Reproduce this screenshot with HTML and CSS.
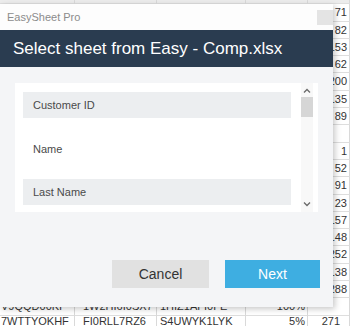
FILE: index.html
```html
<!DOCTYPE html>
<html>
<head>
    <title>EasySheet Pro - Select sheet</title>
    <link rel="stylesheet" href="styles.css">
</head>
<body>
    <div class="sheet">
        <div class="row head"><div class="cell"></div><div class="cell"></div><div class="cell"></div><div class="cell"></div><div class="cell num"></div></div>
        <div class="row"><div class="cell"></div><div class="cell"></div><div class="cell"></div><div class="cell"></div><div class="cell num">71</div></div>
        <div class="row"><div class="cell"></div><div class="cell"></div><div class="cell"></div><div class="cell"></div><div class="cell num">82</div></div>
        <div class="row"><div class="cell"></div><div class="cell"></div><div class="cell"></div><div class="cell"></div><div class="cell num">153</div></div>
        <div class="row"><div class="cell"></div><div class="cell"></div><div class="cell"></div><div class="cell"></div><div class="cell num">62</div></div>
        <div class="row"><div class="cell"></div><div class="cell"></div><div class="cell"></div><div class="cell"></div><div class="cell num">200</div></div>
        <div class="row"><div class="cell"></div><div class="cell"></div><div class="cell"></div><div class="cell"></div><div class="cell num">135</div></div>
        <div class="row"><div class="cell"></div><div class="cell"></div><div class="cell"></div><div class="cell"></div><div class="cell num">89</div></div>
        <div class="row"><div class="cell"></div><div class="cell"></div><div class="cell"></div><div class="cell"></div><div class="cell num"></div></div>
        <div class="row"><div class="cell"></div><div class="cell"></div><div class="cell"></div><div class="cell"></div><div class="cell num">1</div></div>
        <div class="row"><div class="cell"></div><div class="cell"></div><div class="cell"></div><div class="cell"></div><div class="cell num">52</div></div>
        <div class="row"><div class="cell"></div><div class="cell"></div><div class="cell"></div><div class="cell"></div><div class="cell num">91</div></div>
        <div class="row"><div class="cell"></div><div class="cell"></div><div class="cell"></div><div class="cell"></div><div class="cell num">23</div></div>
        <div class="row"><div class="cell"></div><div class="cell"></div><div class="cell"></div><div class="cell"></div><div class="cell num">157</div></div>
        <div class="row"><div class="cell"></div><div class="cell"></div><div class="cell"></div><div class="cell"></div><div class="cell num">148</div></div>
        <div class="row"><div class="cell"></div><div class="cell"></div><div class="cell"></div><div class="cell"></div><div class="cell num">252</div></div>
        <div class="row"><div class="cell"></div><div class="cell"></div><div class="cell"></div><div class="cell"></div><div class="cell num">138</div></div>
        <div class="row"><div class="cell"></div><div class="cell"></div><div class="cell"></div><div class="cell"></div><div class="cell num">288</div></div>
        <div class="row"><div class="cell">V9QQD00KI</div><div class="cell">1W2HI6I0SX7</div><div class="cell">1HIZ1AFI0FE</div><div class="cell num">100%</div><div class="cell num"></div></div>
        <div class="row bottom"><div class="cell">7WTTYOKHF</div><div class="cell">FI0RLL7RZ6</div><div class="cell">S4UWYK1LYK</div><div class="cell num">5%</div><div class="cell num last">271</div></div>
    </div>

    <div class="dialog">
        <div class="titlebar">
            <span>EasySheet Pro</span>
            <div class="close"></div>
        </div>
        <div class="header">Select sheet from Easy - Comp.xlsx</div>
        <div class="content">
            <div class="panel">
                <div class="list">
                    <div class="item shaded">Customer ID</div>
                    <div class="item">Name</div>
                    <div class="item shaded">Last Name</div>
                </div>
                <div class="scrollbar">
                    <svg class="arrow" width="8" height="5" viewBox="0 0 8 5"><polyline points="1,4.5 4,1.5 7,4.5" fill="none" stroke="#6a6a6a" stroke-width="1.3"/></svg>
                    <div class="thumb"></div>
                    <div class="track"></div>
                    <svg class="arrow" width="8" height="5" viewBox="0 0 8 5"><polyline points="1,0.5 4,3.5 7,0.5" fill="none" stroke="#6a6a6a" stroke-width="1.3"/></svg>
                </div>
            </div>
        </div>
        <div class="footer">
            <button class="btn cancel" type="button">Cancel</button>
            <button class="btn next" type="button">Next</button>
        </div>
    </div>
</body>
</html>
```

FILE: styles.css
```css
body {
    margin: 0;
    background: #ffffff;
    font-family: "Liberation Sans", Arial, sans-serif;
    overflow: hidden;
}

/* spreadsheet behind the dialog */
.sheet {
    margin-top: -13px;
}
.row {
    display: grid;
    grid-template-columns: 75px 82px 89px 62px 42px;
    height: 17.3px;
}
.row.head .cell {
    background: #ececec;
}
.row.bottom {
    margin-top: -3px;
}
.cell {
    border-right: 1px solid #d9d9d9;
    border-bottom: 1px solid #dedede;
    font-size: 11px;
    line-height: 16px;
    color: #333;
    padding: 0 3px;
    white-space: nowrap;
    overflow: hidden;
}
.cell:first-child {
    padding-left: 1px;
}
.cell:nth-child(2) {
    padding-left: 8px;
}
.cell.num {
    text-align: right;
    padding-right: 2px;
}
.cell.last {
    padding-right: 9px;
}

/* dialog */
.dialog {
    position: absolute;
    left: 0;
    top: 4px;
    width: 333px;
    height: 303px;
    background: #f4f5f7;
    display: flex;
    flex-direction: column;
    box-shadow: 2px 2px 6px rgba(0, 0, 0, 0.22);
}
.titlebar {
    height: 26px;
    background: #fdfdfd;
    display: flex;
    align-items: center;
    justify-content: space-between;
    padding-left: 7px;
    font-size: 11px;
    color: #8c8c8c;
}
.close {
    width: 16px;
    height: 15px;
    background: #e4e4e4;
}
.header {
    height: 37px;
    background: #2a3c50;
    color: #ffffff;
    font-size: 17px;
    padding-left: 13px;
    display: flex;
    align-items: center;
}
.content {
    padding: 16px 15px 0 15px;
}
.panel {
    background: #ffffff;
    height: 129px;
    display: flex;
    padding: 0 5px 0 8px;
}
.list {
    flex: 1;
    overflow: hidden;
    padding-top: 9px;
}
.item {
    height: 26px;
    line-height: 26px;
    margin-bottom: 17.5px;
    padding-left: 10px;
    font-size: 11px;
    color: #4a4a4a;
}
.item.shaded {
    background: #eceef0;
}
.scrollbar {
    width: 12px;
    margin-left: 10px;
    display: flex;
    flex-direction: column;
    align-items: center;
    padding: 5px 0 5px 0;
    background: #f8f8f8;
}
.arrow {
    display: block;
}
.thumb {
    width: 12px;
    height: 20px;
    margin-top: 4px;
    background: #d6d6d6;
}
.track {
    flex: 1;
}
.footer {
    margin-top: auto;
    display: flex;
    justify-content: flex-end;
    gap: 16px;
    padding: 0 13px 19px 0;
}
.btn {
    height: 28px;
    border: none;
    font-family: "Liberation Sans", Arial, sans-serif;
    font-size: 14px;
    cursor: pointer;
}
.cancel {
    width: 97px;
    background: #e1e1e1;
    color: #333;
}
.next {
    width: 95px;
    background: #3eaee1;
    color: #ffffff;
}
```
